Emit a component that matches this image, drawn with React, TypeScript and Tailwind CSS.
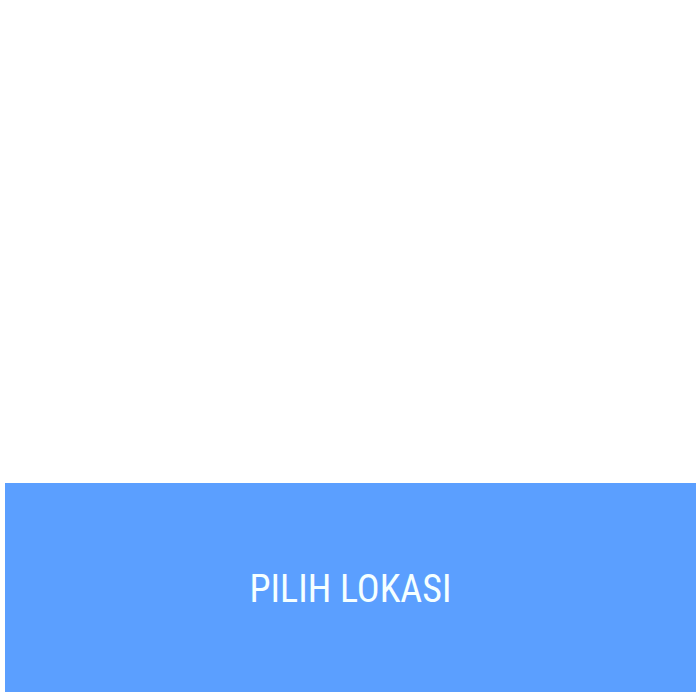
export default function App() {
  return (
    <main className="flex min-h-screen flex-col justify-end bg-white pt-4 pr-1 pb-2 pl-[5px]">
      <button
        type="button"
        className="flex w-full cursor-pointer items-center justify-center bg-[#5b9fff] pt-[84px] pb-[80px] font-['Roboto_Condensed','Liberation_Sans',Arial,sans-serif] text-[38px] leading-[45px] text-[#f5ffff]"
      >
        PILIH LOKASI
      </button>
    </main>
  );
}
